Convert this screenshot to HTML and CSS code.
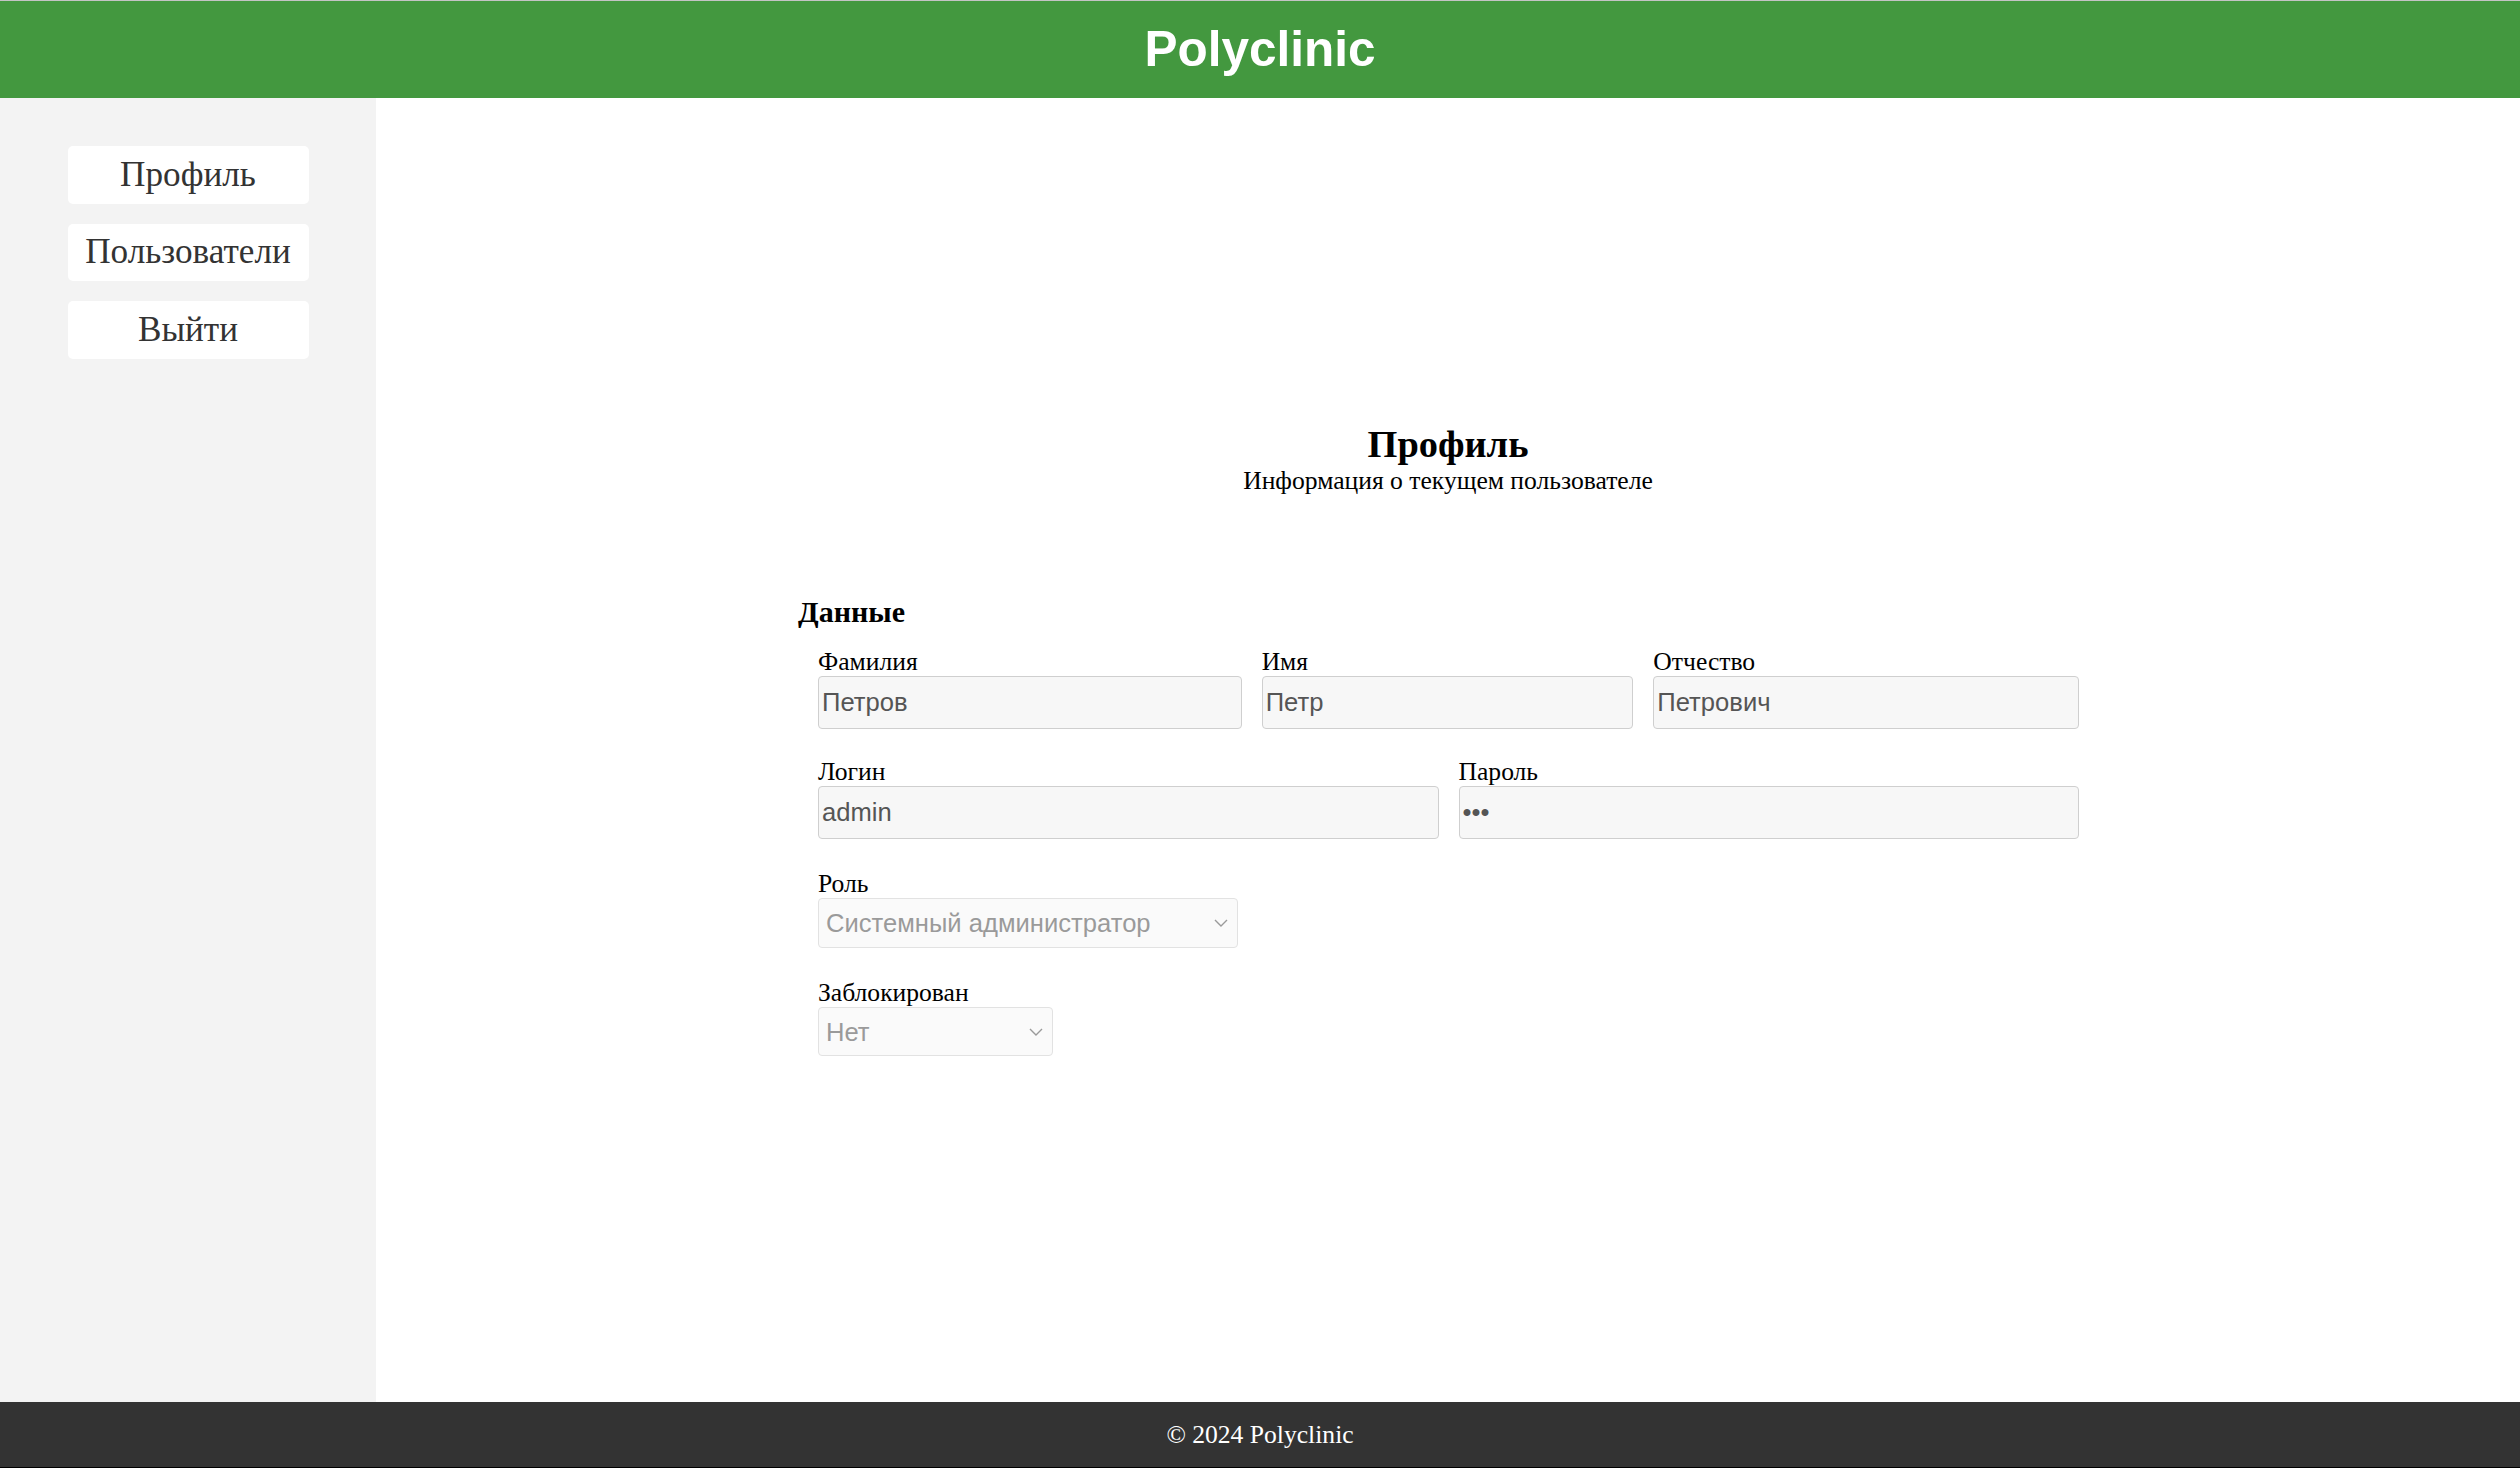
FILE: index.html
```html
<!DOCTYPE html>
<html lang="ru">
<head>
<meta charset="utf-8">
<title>Polyclinic</title>
<link rel="stylesheet" href="styles.css">
</head>
<body>
<header class="topbar">
  <h1 class="brand">Polyclinic</h1>
</header>
<div class="layout">
  <nav class="sidebar">
    <button class="nav-btn" type="button">Профиль</button>
    <button class="nav-btn" type="button">Пользователи</button>
    <button class="nav-btn" type="button">Выйти</button>
  </nav>
  <main class="content">
    <div class="page-head">
      <h2 class="page-title">Профиль</h2>
      <p class="page-sub">Информация о текущем пользователе</p>
    </div>
    <form class="profile-form">
      <h3 class="section-title">Данные</h3>
      <div class="fields">
        <div class="row row-3">
          <div class="field">
            <label class="field-label">Фамилия</label>
            <input class="text-input" type="text" value="Петров" readonly>
          </div>
          <div class="field">
            <label class="field-label">Имя</label>
            <input class="text-input" type="text" value="Петр" readonly>
          </div>
          <div class="field">
            <label class="field-label">Отчество</label>
            <input class="text-input" type="text" value="Петрович" readonly>
          </div>
        </div>
        <div class="row row-2">
          <div class="field">
            <label class="field-label">Логин</label>
            <input class="text-input" type="text" value="admin" readonly>
          </div>
          <div class="field">
            <label class="field-label">Пароль</label>
            <input class="text-input" type="password" value="123" readonly>
          </div>
        </div>
        <div class="row row-select">
          <div class="field">
            <label class="field-label">Роль</label>
            <div class="select-wrap select-role">
              <select class="select" disabled>
                <option>Системный администратор</option>
              </select>
              <svg class="chevron" width="14" height="8" viewBox="0 0 14 8"><path d="M1 1 L7 7 L13 1" fill="none" stroke="#9a9a9a" stroke-width="1.4"/></svg>
            </div>
          </div>
        </div>
        <div class="row row-select">
          <div class="field">
            <label class="field-label">Заблокирован</label>
            <div class="select-wrap select-blocked">
              <select class="select" disabled>
                <option>Нет</option>
              </select>
              <svg class="chevron" width="14" height="8" viewBox="0 0 14 8"><path d="M1 1 L7 7 L13 1" fill="none" stroke="#9a9a9a" stroke-width="1.4"/></svg>
            </div>
          </div>
        </div>
      </div>
    </form>
  </main>
</div>
<footer class="footer">© 2024 Polyclinic</footer>
</body>
</html>
```

FILE: styles.css
```css
* { box-sizing: border-box; }

html, body {
  margin: 0;
  padding: 0;
  height: 100%;
}

body {
  display: flex;
  flex-direction: column;
  font-family: "Liberation Serif", "Times New Roman", serif;
  font-size: 25.6px;
  color: #000;
  background: #fff;
}

.topbar {
  height: 98px;
  border-top: 1px solid #c4c4c4;
  background: #43983f;
  display: flex;
  align-items: center;
  justify-content: center;
  flex: none;
}

.brand {
  margin: 0;
  font-family: "Liberation Sans", Arial, sans-serif;
  font-size: 49.5px;
  font-weight: bold;
  color: #fff;
  line-height: 1;
  padding-bottom: 2px;
}

.layout {
  flex: 1;
  display: flex;
  min-height: 0;
}

.sidebar {
  width: 376px;
  flex: none;
  background: #f3f3f3;
  padding-top: 48px;
  display: flex;
  flex-direction: column;
  align-items: center;
  gap: 20px;
}

.nav-btn {
  width: 241px;
  height: 57.5px;
  border: none;
  border-radius: 5px;
  background: #fff;
  font-family: "Liberation Serif", "Times New Roman", serif;
  font-size: 35.2px;
  color: #333;
  padding: 0;
  cursor: pointer;
}

.content {
  flex: 1;
  display: flex;
  flex-direction: column;
  align-items: center;
  padding-top: 324px;
}

.page-head {
  text-align: center;
}

.page-title {
  margin: 0;
  font-size: 38.4px;
  font-weight: bold;
}

.page-sub {
  margin: 0;
  font-size: 25.6px;
}

.profile-form {
  width: 1300px;
  margin-top: 99px;
}

.section-title {
  margin: 0 0 18px 0;
  font-size: 30px;
  font-weight: bold;
}

.fields {
  padding: 0 19px 0 20px;
  display: flex;
  flex-direction: column;
  gap: 28px;
}

.row {
  display: grid;
  gap: 20px;
}

.row-3 {
  grid-template-columns: 424fr 372fr 426fr;
}

.row-2 {
  grid-template-columns: 1fr 1fr;
}

.row-select {
  margin-top: 2px;
}

.field {
  display: flex;
  flex-direction: column;
  align-items: flex-start;
}

.field-label {
  display: block;
  font-size: 25.6px;
  line-height: 29px;
}

.text-input {
  width: 100%;
  height: 53px;
  border: 1px solid #cfcfcf;
  border-radius: 4px;
  background: #f7f7f7;
  color: #555;
  font-family: "Liberation Sans", Arial, sans-serif;
  font-size: 25.6px;
  padding: 0 3px;
  outline: none;
}

.select-wrap {
  position: relative;
}

.select-role { width: 420px; height: 50px; }
.select-blocked { width: 235px; height: 49px; }

.select {
  appearance: none;
  -webkit-appearance: none;
  width: 100%;
  height: 100%;
  border: 1px solid #e2e2e2;
  border-radius: 4px;
  background: #fafafa;
  color: #9a9a9a;
  font-family: "Liberation Sans", Arial, sans-serif;
  font-size: 25.6px;
  padding: 0 40px 0 7px;
  opacity: 1;
}

.chevron {
  position: absolute;
  right: 10px;
  top: 50%;
  margin-top: -4px;
}

.footer {
  flex: none;
  height: 66px;
  background: #333;
  color: #fff;
  border-bottom: 1px solid #000;
  display: flex;
  align-items: center;
  justify-content: center;
  font-size: 25.6px;
}
```
